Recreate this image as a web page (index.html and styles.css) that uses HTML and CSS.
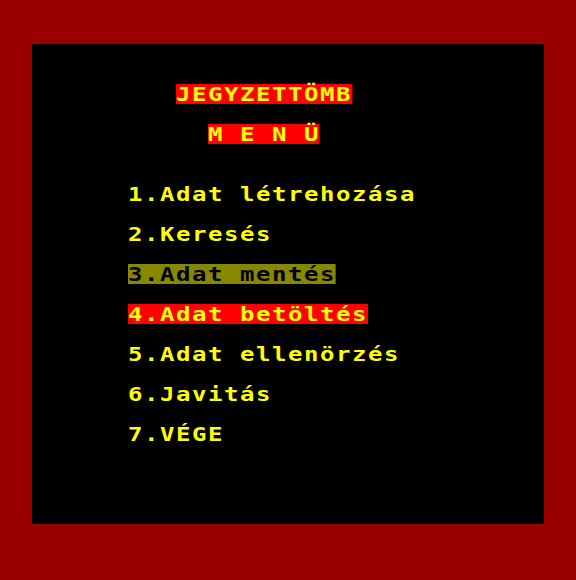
FILE: index.html
```html
<!DOCTYPE html>
<html lang="hu">
<head>
<meta charset="utf-8">
<title>JEGYZETTÖMB</title>
<link rel="stylesheet" href="styles.css">
</head>
<body>
  <main class="screen">
    <h1 class="line title"><span class="ink-yellow paper-red">JEGYZETTÖMB</span></h1>
    <h2 class="line subtitle"><span class="ink-yellow paper-red">M E N Ü</span></h2>
    <ol class="menu">
      <li class="line item"><span class="ink-yellow">1.Adat létrehozása</span></li>
      <li class="line item"><span class="ink-yellow">2.Keresés</span></li>
      <li class="line item"><span class="ink-black paper-olive">3.Adat mentés</span></li>
      <li class="line item"><span class="ink-yellow paper-red">4.Adat betöltés</span></li>
      <li class="line item"><span class="ink-yellow">5.Adat ellenörzés</span></li>
      <li class="line item"><span class="ink-yellow">6.Javitás</span></li>
      <li class="line item"><span class="ink-yellow">7.VÉGE</span></li>
    </ol>
  </main>
</body>
</html>
```

FILE: styles.css
```css
/* Character grid: each cell is 16px wide and 20px tall */
html, body {
  margin: 0;
  padding: 0;
}

body {
  background: #990000;
  width: 576px;
  height: 580px;
  overflow: hidden;
  padding-top: 44px;
  box-sizing: border-box;
}

.screen {
  margin-left: 32px;
  width: 512px;
  height: 480px;
  background: #000;
  box-sizing: border-box;
  padding-top: 40px;
  display: flex;
  flex-direction: column;
  gap: 20px;
  font-family: "DejaVu Sans Mono", "Liberation Mono", monospace;
  font-weight: bold;
  font-size: 20px;
}

.line {
  margin: 0;
  height: 20px;
  line-height: 20px;
  font-size: 20px;
  font-weight: bold;
  white-space: pre;
}

/* Glyphs are stretched sideways to the wide block letters of the
   character set; 13.33px advance x 1.2 = one 16px cell */
.line span {
  display: inline-block;
  height: 20px;
  letter-spacing: 1.29px;
  transform: scaleX(1.2);
  transform-origin: left center;
}

.title {
  padding-left: 144px;
}

.subtitle {
  padding-left: 176px;
}

.menu {
  list-style: none;
  margin: 20px 0 0;
  padding: 0;
  display: flex;
  flex-direction: column;
  gap: 20px;
}

.item {
  padding-left: 96px;
}

.ink-yellow { color: #ffff00; }
.ink-black { color: #000; }
.paper-red { background: #ff0000; }
.paper-olive { background: #888800; }
```
